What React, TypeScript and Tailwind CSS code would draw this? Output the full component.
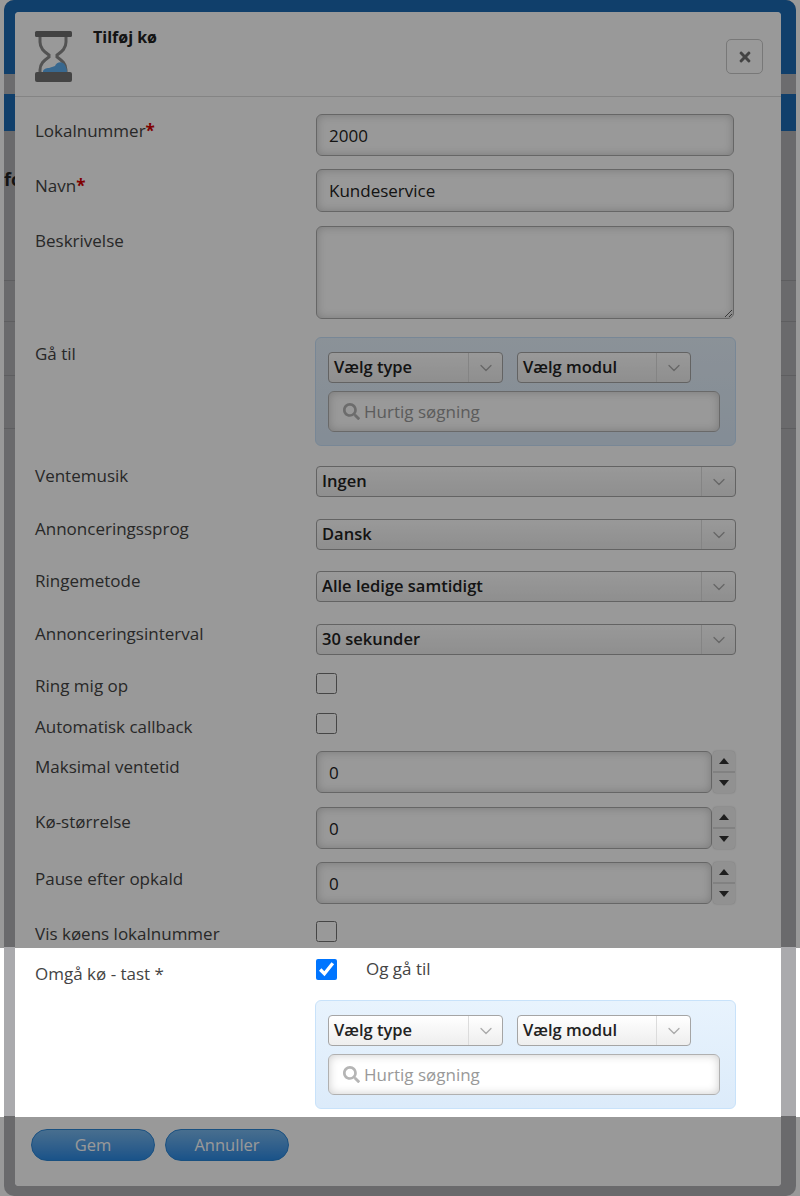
import { ChevronDown } from 'lucide-react';
import { FaSearch, FaTimes } from 'react-icons/fa';

function Hourglass() {
  return (
    <svg viewBox="0 0 38 52" className="h-[52px] w-[38px]">
      <path d="M6 7v5c0 7 5 10 9 13v2c-4 3-9 6-9 13v3M32 7v5c0 7-5 10-9 13v2c4 3 9 6 9 13v3" fill="none" stroke="#8a8a8a" strokeWidth="3" />
      <path d="M9 42c0-3 3-4 6-4 2-1 4-1 6-2 1-3 5-5 8-3 2 1 4 5 4 9z" fill="#5eaeee" />
      <rect x="1" y="1" width="37" height="6" rx="1.5" fill="#6e6e6e" />
      <rect x="1" y="42" width="37" height="10" rx="2" fill="#727272" />
    </svg>
  );
}

function Select({ label, className }: { label: string; className: string }) {
  return (
    <div className={`flex h-[31px] items-center rounded-[4px] border border-[#a5a5a5] bg-gradient-to-b from-white to-[#eeeeee] text-[16.5px] font-semibold text-[#222] ${className}`}>
      <span className="flex-1 pb-px pl-[5px]">{label}</span>
      <span className="flex h-full w-[34px] items-center justify-center border-l border-[#dcdcdc]">
        <ChevronDown size={20} strokeWidth={1.5} className="text-[#aaa]" />
      </span>
    </div>
  );
}

function GotoPanel() {
  return (
    <div className="-ml-px h-[109px] w-[421px] rounded-[6px] border border-[#c8e2fa] bg-gradient-to-b from-[#e8f3fd] to-[#dcebfa] pl-[12px] pt-[14px]">
      <div className="flex gap-[14px]">
        <Select label="Vælg type" className="w-[175px]" />
        <Select label="Vælg modul" className="w-[174px]" />
      </div>
      <div className="mt-[8px] flex h-[41px] w-[392px] items-center rounded-[6px] border border-[#b0b0b0] bg-white pl-[14px] text-[17px] text-[#999] shadow-[inset_0_0_10px_rgba(0,0,0,0.2)]">
        <FaSearch size={17} className="mr-[4px] text-[#b5b5b5]" />
        Hurtig søgning
      </div>
    </div>
  );
}

function Row({ label, top, labelTop, req, children }: { label: string; top: string; labelTop: string; req?: boolean; children: React.ReactNode }) {
  return (
    <div className={`flex ${top}`}>
      <div className={`h-0 w-[281px] text-[17px] leading-[20px] text-[#444] ${labelTop}`}>
        {label}
        {req && <span className="font-bold text-[#d40000]">*</span>}
      </div>
      <div>{children}</div>
    </div>
  );
}

const inputCls =
  'block rounded-[6px] border border-[#aaaaaa] bg-white px-[12px] text-[17px] text-[#222] shadow-[inset_0_0_10px_rgba(0,0,0,0.2)] outline-none';

function TextInput({ value, h }: { value: string; h: string }) {
  return <input readOnly defaultValue={value} className={`${inputCls} w-[418px] ${h}`} />;
}

function NumberInput() {
  return (
    <div className="flex">
      <input readOnly defaultValue="0" className={`${inputCls} h-[42px] w-[396px]`} />
      <div className="ml-px flex h-[42px] w-[22px] flex-col rounded-[4px] bg-[#f2f2f2] shadow-[0_0_2px_rgba(0,0,0,0.25)]">
        <span className="flex flex-1 items-center justify-center border-b-2 border-[#d8d8d8]">
          <svg viewBox="0 0 10 6" className="h-[6px] w-[10px]"><path d="M5 0l5 6H0z" fill="#333" /></svg>
        </span>
        <span className="flex flex-1 items-center justify-center">
          <svg viewBox="0 0 10 6" className="h-[6px] w-[10px]"><path d="M5 6L0 0h10z" fill="#333" /></svg>
        </span>
      </div>
    </div>
  );
}

function Checkbox({ checked }: { checked?: boolean }) {
  return <input type="checkbox" readOnly checked={!!checked} className="block h-[21px] w-[21px]" />;
}

export default function App() {
  return (
    <div className="relative isolate h-[1196px] w-[800px] overflow-hidden bg-[linear-gradient(#999999_948px,#ffffff_948px,#ffffff_1117px,#999999_1117px)] pl-[4px] font-['Open_Sans',sans-serif]">
      {/* page behind the dialog, colours already dimmed outside the lit band */}
      <div className="flex h-[1196px] w-[792px] flex-col overflow-hidden rounded-[10px] bg-[#6a6a6c]">
        <div className="h-[74px] shrink-0 bg-[#103f6b]" />
        <div className="h-[20px] shrink-0 bg-[#6c6c6e]" />
        <div className="h-[37px] shrink-0 bg-[#103f6b]" />
        <div className="pt-[36px] text-[18px] font-bold leading-[24px] text-[#141414]">fo</div>
        <div className="mt-[89px] h-[41px] shrink-0 border-t border-[#5e5e60]" />
        <div className="h-[54px] shrink-0 border-t border-[#5e5e60]" />
        <div className="h-[53px] shrink-0 border-t border-[#5e5e60]" />
        <div className="h-[519px] shrink-0 border-t border-[#5e5e60]" />
        <div className="h-[169px] shrink-0 bg-[#aaaaad]" />
      </div>

      {/* dialog */}
      <div className="absolute left-[15px] top-[12px] z-10 h-[1174px] w-[766px] overflow-hidden rounded-[4px] bg-white">
        <div className="flex h-[85px] border-b border-[#ddd] pl-[19px] pr-[18px] pt-[18px]">
          <Hourglass />
          <div className="ml-[21px] mt-[-3px] text-[16px] font-bold leading-[20px] text-[#222]">Tilføj kø</div>
          <button className="ml-auto mt-[9px] flex h-[35px] w-[37px] items-center justify-center rounded-[5px] border border-[#c8c8c8] text-[#707070]">
            <FaTimes size={16} />
          </button>
        </div>

        <div className="pl-[20px]">
          <Row label="Lokalnummer" req top="pt-[17px]" labelTop="pt-[7px]">
            <TextInput value="2000" h="h-[42px]" />
          </Row>
          <Row label="Navn" req top="mt-[13px]" labelTop="pt-[7px]">
            <TextInput value="Kundeservice" h="h-[43px]" />
          </Row>
          <Row label="Beskrivelse" top="mt-[14px]" labelTop="pt-[5px]">
            <textarea readOnly className={`${inputCls} h-[93px] w-[418px]`} />
          </Row>
          <Row label="Gå til" top="mt-[18px]" labelTop="pt-[7px]">
            <GotoPanel />
          </Row>
          <Row label="Ventemusik" top="mt-[20px]" labelTop="pt-0">
            <Select label="Ingen" className="w-[420px]" />
          </Row>
          <Row label="Annonceringssprog" top="mt-[22px]" labelTop="pt-0">
            <Select label="Dansk" className="w-[420px]" />
          </Row>
          <Row label="Ringemetode" top="mt-[21px]" labelTop="pt-0">
            <Select label="Alle ledige samtidigt" className="w-[420px]" />
          </Row>
          <Row label="Annonceringsinterval" top="mt-[22px]" labelTop="pt-0">
            <Select label="30 sekunder" className="w-[420px]" />
          </Row>
          <Row label="Ring mig op" top="mt-[18px]" labelTop="pt-[3px]">
            <Checkbox />
          </Row>
          <Row label="Automatisk callback" top="mt-[19px]" labelTop="pt-[4px]">
            <Checkbox />
          </Row>
          <Row label="Maksimal ventetid" top="mt-[17px]" labelTop="pt-[6px]">
            <NumberInput />
          </Row>
          <Row label="Kø-størrelse" top="mt-[14px]" labelTop="pt-[5px]">
            <NumberInput />
          </Row>
          <Row label="Pause efter opkald" top="mt-[13px]" labelTop="pt-[7px]">
            <NumberInput />
          </Row>
          <Row label="Vis køens lokalnummer" top="mt-[17px]" labelTop="pt-[3px]">
            <Checkbox />
          </Row>
          <Row label="Omgå kø - tast *" top="mt-[17px]" labelTop="pt-[5px]">
            <div className="flex items-start">
              <Checkbox checked />
              <span className="ml-[29px] text-[17px] leading-[20px] text-[#444]">Og gå til</span>
            </div>
            <div className="mt-[20px]">
              <GotoPanel />
            </div>
          </Row>
          <div className="mt-[20px] flex gap-[10px]">
            <button className="-ml-[4px] h-[32px] w-[124px] rounded-full border border-[#2b85d6] bg-gradient-to-b from-[#78b8ee] to-[#2a8ae4] text-[16.5px] text-white">Gem</button>
            <button className="h-[32px] w-[124px] rounded-full border border-[#2b85d6] bg-gradient-to-b from-[#78b8ee] to-[#2a8ae4] text-[16.5px] text-white">Annuller</button>
          </div>
        </div>

        {/* tour dimming over the dialog, the band between the two stays lit */}
        <div className="absolute inset-x-0 top-0 z-20 h-[936px] bg-black/40" />
        <div className="absolute inset-x-0 bottom-0 z-20 h-[69px] bg-black/40" />
      </div>
    </div>
  );
}
